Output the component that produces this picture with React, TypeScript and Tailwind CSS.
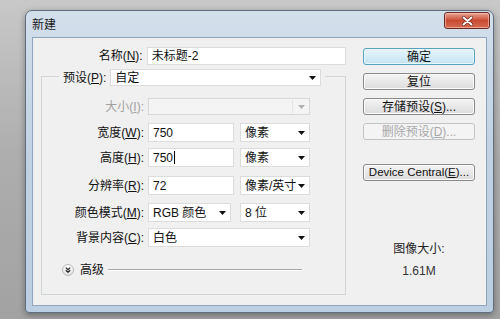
import React from "react";

const Arrow = ({ grey }: { grey?: boolean }) => (
  <svg width="7" height="4" viewBox="0 0 7 4" className="shrink-0">
    <path d="M0 0h7L3.5 4z" fill={grey ? "#b0b0b0" : "#111"} />
  </svg>
);

const Field = ({ w, children, caret }: { w: string; children?: React.ReactNode; caret?: boolean }) => (
  <div className={`${w} h-[19px] bg-white border border-[#dcdcdc] flex items-center pl-[4px] text-[12px] text-[#111]`}>
    {children}
    {caret && <span className="w-px h-[13px] bg-black ml-px" />}
  </div>
);

const Select = ({ w, h = "h-[19px]", children }: { w: string; h?: string; children?: React.ReactNode }) => (
  <div className={`${w} ${h} bg-white border border-[#dcdcdc] flex items-center justify-between pl-[4px] pr-[4px] text-[12px] text-[#111]`}>
    <span className="whitespace-nowrap">{children}</span>
    <Arrow />
  </div>
);

const Label = ({ children, grey }: { children: React.ReactNode; grey?: boolean }) => (
  <span className={`w-[102px] text-right text-[12px] whitespace-nowrap ${grey ? "text-[#a0a0a0]" : "text-[#111]"}`}>{children}</span>
);

const Btn = ({ children, primary, disabled, className = "" }: { children: React.ReactNode; primary?: boolean; disabled?: boolean; className?: string }) => (
  <div
    className={`w-[112px] h-[17px] rounded-[3px] border flex items-center justify-center text-[12px] leading-none ${className} ${
      primary
        ? "border-[#5aa0c0] bg-gradient-to-b from-[#e8f5fc] to-[#c4e3f2] text-[#111] shadow-[inset_0_0_0_1px_#e8f8ff]"
        : disabled
        ? "border-[#c0c4c6] bg-[#f4f4f4] text-[#a8a8a8]"
        : "border-[#8a8a8a] bg-gradient-to-b from-[#f4f4f4] to-[#dcdcdc] text-[#111] shadow-[inset_0_0_0_1px_#fafafa]"
    }`}
  >
    {children}
  </div>
);

export default function App() {
  return (
    <div className="w-[500px] h-[319px] overflow-hidden bg-gradient-to-b from-[#c8c8c8] via-[#adadad] to-[#a2a2a2] pt-[10px] pl-[25px] font-['Liberation_Sans','Noto_Sans_CJK_SC',sans-serif] leading-none">
      <div className="w-[469px] h-[303px] rounded-t-[7px] rounded-b-[4px] border border-[#5f6f80] bg-gradient-to-b from-[#d3dfeb] via-[#c0d1e2] to-[#bccfe2] flex flex-col shadow-[0_2px_6px_rgba(0,0,0,0.35)]">
        {/* title bar */}
        <div className="h-[26px] flex items-start justify-between pl-[6px] pr-[3px]">
          <span className="mt-[8px] text-[12px] text-[#1a1a1a]">新建</span>
          <div className="mt-[1px] w-[46px] h-[17px] rounded-[3px] border border-[#6b2a22] bg-gradient-to-b from-[#e8a393] via-[#c94a33] to-[#d46a4f] flex items-center justify-center shadow-[inset_0_0_0_1px_rgba(255,220,210,0.5)]">
            <svg width="11" height="10" viewBox="0 0 11 10">
              <path d="M1.5 1.5l8 7M9.5 1.5l-8 7" stroke="#5a1a10" strokeWidth="3" strokeLinecap="round" />
              <path d="M1.5 1.5l8 7M9.5 1.5l-8 7" stroke="#fff" strokeWidth="2" strokeLinecap="round" />
            </svg>
          </div>
        </div>
        {/* client */}
        <div className="mx-[6px] mb-[6px] flex-1 bg-[#f0f0f0] border border-[#8fa4ba] flex">
          {/* left */}
          <div className="w-[313px] flex flex-col">
            <div className="mt-[9px] flex items-center gap-[4px]">
              <span className="w-[110px] text-right text-[12px] text-[#111]">名称(<u>N</u>):</span>
              <Field w="w-[200px] !h-[18px]">未标题-2</Field>
            </div>
            <div className="mt-[11px] ml-[8px] w-[305px] h-[219px] border border-[#d0d5d8] flex flex-col">
              <div className="-mt-[8px] ml-[17px] px-[4px] w-fit bg-[#f0f0f0] flex items-center gap-[4px]">
                <span className="text-[12px] text-[#111] whitespace-nowrap">预设(<u>P</u>):</span>
                <Select w="w-[211px]" h="h-[17px]">自定</Select>
              </div>
              <div className="mt-[12px] flex items-center gap-[4px]">
                <Label grey>大小(<u>I</u>):</Label>
                <div className="w-[162px] h-[17px] bg-[#f4f4f4] border border-[#d8d8d8] flex items-center justify-end pr-[4px]">
                  <span className="w-px h-[13px] bg-[#e4e4e4] mr-[5px]" />
                  <Arrow grey />
                </div>
              </div>
              <div className="mt-[8px] flex items-center gap-[4px]">
                <Label>宽度(<u>W</u>):</Label>
                <Field w="w-[86px]">750</Field>
                <Select w="w-[70px] ml-[2px]">像素</Select>
              </div>
              <div className="mt-[6px] flex items-center gap-[4px]">
                <Label>高度(<u>H</u>):</Label>
                <Field w="w-[86px]" caret>750</Field>
                <Select w="w-[70px] ml-[2px]">像素</Select>
              </div>
              <div className="mt-[9px] flex items-center gap-[4px]">
                <Label>分辨率(<u>R</u>):</Label>
                <Field w="w-[86px]">72</Field>
                <Select w="w-[70px] ml-[2px]">像素/英寸</Select>
              </div>
              <div className="mt-[8px] flex items-center gap-[4px]">
                <Label>颜色模式(<u>M</u>):</Label>
                <Select w="w-[83px]">RGB 颜色</Select>
                <Select w="w-[70px] ml-[5px]">8 位</Select>
              </div>
              <div className="mt-[6px] flex items-center gap-[4px]">
                <Label>背景内容(<u>C</u>):</Label>
                <Select w="w-[162px]">白色</Select>
              </div>
              <div className="mt-[17px] ml-[20px] flex items-center">
                <div className="w-[12px] h-[12px] rounded-full border border-[#b8b8b8] bg-gradient-to-b from-white to-[#e2e2e2] flex items-center justify-center">
                  <svg width="6" height="6" viewBox="0 0 6 6">
                    <path d="M0.8 0.6L3 2.6 5.2 0.6M0.8 3.2L3 5.2 5.2 3.2" stroke="#222" strokeWidth="1.2" fill="none" />
                  </svg>
                </div>
                <span className="ml-[6px] text-[12px] text-[#111]">高级</span>
                <div className="ml-[4px] w-[194px] h-[2px] border-t border-[#a8a8a8] border-b border-b-white" />
              </div>
            </div>
          </div>
          {/* right */}
          <div className="ml-[17px] w-[112px] flex flex-col items-center">
            <Btn primary className="mt-[10px]">确定</Btn>
            <Btn className="mt-[8px]">复位</Btn>
            <Btn className="mt-[8px]">存储预设(<u>S</u>)...</Btn>
            <Btn disabled className="mt-[8px]">删除预设(<u>D</u>)...</Btn>
            <Btn className="mt-[24px] !text-[11.5px]">Device Central(<u>E</u>)...</Btn>
            <span className="mt-[62px] text-[12px] text-[#222]">图像大小:</span>
            <span className="mt-[10px] text-[12px] text-[#333]">1.61M</span>
          </div>
        </div>
      </div>
    </div>
  );
}
